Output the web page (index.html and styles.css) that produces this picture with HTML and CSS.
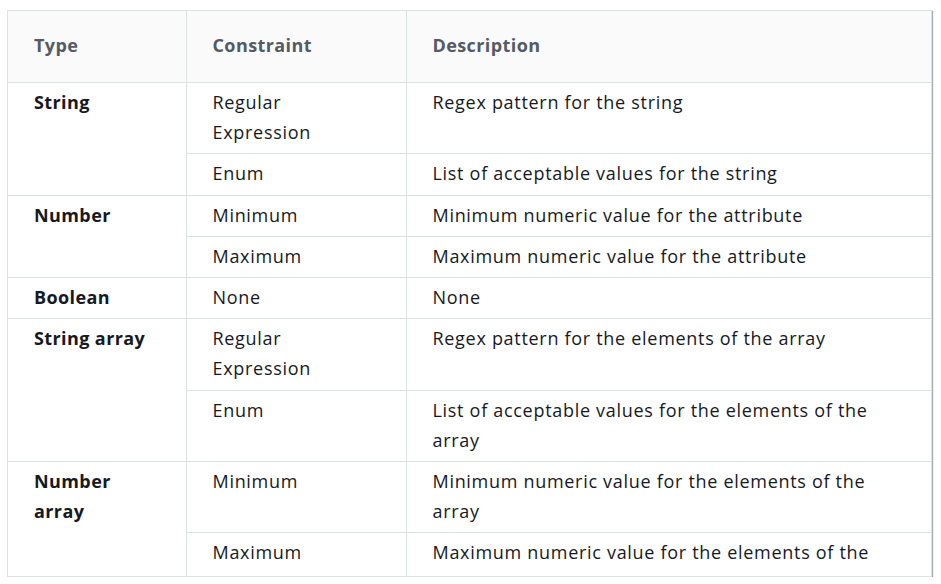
FILE: index.html
```html
<!DOCTYPE html>
<html lang="en">
<head>
<meta charset="utf-8">
<title>Constraints</title>
<link rel="stylesheet" href="styles.css">
</head>
<body>
<div class="table-container">
  <table class="constraints">
    <colgroup>
      <col class="col-type">
      <col class="col-constraint">
      <col class="col-desc">
    </colgroup>
    <thead>
      <tr><th>Type</th><th>Constraint</th><th>Description</th></tr>
    </thead>
    <tbody>
      <tr><td class="type" rowspan="2">String</td><td class="cons">Regular Expression</td><td>Regex pattern for the string</td></tr>
      <tr><td class="cons">Enum</td><td>List of acceptable values for the string</td></tr>
      <tr><td class="type" rowspan="2">Number</td><td class="cons">Minimum</td><td>Minimum numeric value for the attribute</td></tr>
      <tr><td class="cons">Maximum</td><td>Maximum numeric value for the attribute</td></tr>
      <tr><td class="type">Boolean</td><td class="cons">None</td><td>None</td></tr>
      <tr><td class="type" rowspan="2">String array</td><td class="cons">Regular Expression</td><td>Regex pattern for the elements of the array</td></tr>
      <tr><td class="cons">Enum</td><td>List of acceptable values for the elements of the array</td></tr>
      <tr><td class="type" rowspan="2">Number array</td><td class="cons">Minimum</td><td>Minimum numeric value for the elements of the array</td></tr>
      <tr><td class="cons">Maximum</td><td>Maximum numeric value for the elements of the array</td></tr>
    </tbody>
  </table>
</div>
</body>
</html>
```
FILE: styles.css
```css
html, body {
  margin: 0;
  padding: 0;
  background: #ffffff;
}

body {
  font-family: "Open Sans", "DejaVu Sans", sans-serif;
  font-size: 18px;
  line-height: 30.2px;
  letter-spacing: 0.7px;
  color: #16191f;
}

.table-container {
  margin: 10px 0 0 7px;
  width: 923px;
  height: 565px;
  border: 1px solid #dce1e1;
  box-shadow: 1px 1px 1px 0 rgba(0, 28, 36, 0.35);
  overflow: hidden;
}

.constraints {
  width: 100%;
  border-collapse: collapse;
  border-style: hidden;
  table-layout: fixed;
}

.col-type { width: 178px; }
.col-constraint { width: 220px; }

.constraints th,
.constraints td {
  border: 1px solid #dce1e1;
  text-align: left;
  vertical-align: top;
  padding: 4px 30px 6px 26px;
}

.constraints th {
  background: #fafafa;
  color: #545b64;
  font-weight: 700;
  letter-spacing: 0.4px;
  line-height: 30px;
  padding-top: 19px;
  padding-bottom: 22px;
}

.constraints td.type {
  font-weight: 700;
  letter-spacing: 0.4px;
  padding-right: 40px;
}

.constraints td.cons {
  padding-right: 50px;
}
```
